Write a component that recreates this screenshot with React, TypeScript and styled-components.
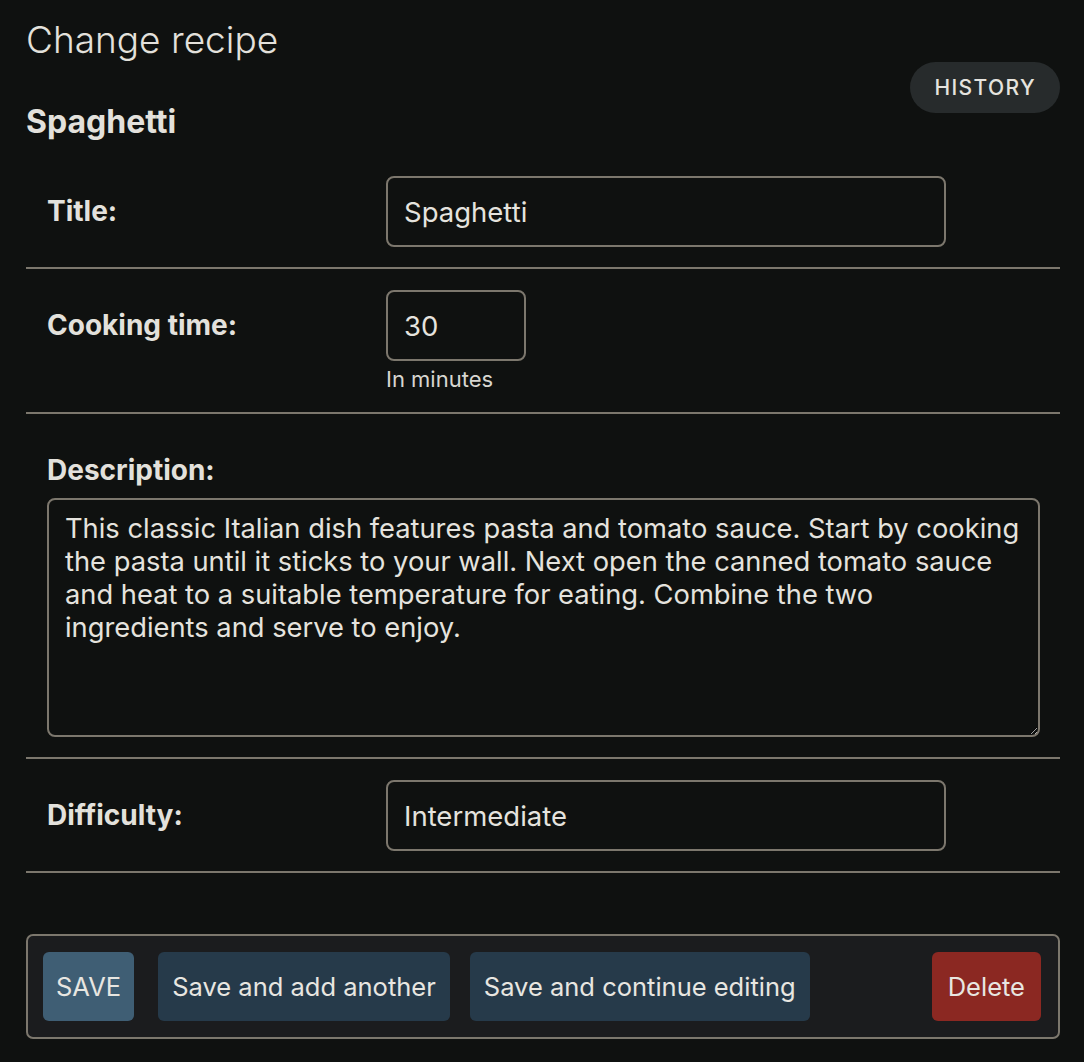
import React from "react";
import styled, { createGlobalStyle } from "styled-components";

const Global = createGlobalStyle`
  html, body { margin: 0; padding: 0; background: #0f1110; }
  body { font-family: Inter, "Noto Sans", sans-serif; color: #e5e3de; }
  * { box-sizing: border-box; }
`;

const Page = styled.main`
  width: 1084px;
  padding: 0 24px 0 26px;
`;

const Header = styled.header`
  display: flex;
  justify-content: space-between;
  align-items: flex-start;
`;

const Titles = styled.div`
  display: flex;
  flex-direction: column;
`;

const H1 = styled.h1`
  margin: 17px 0 0;
  font-size: 37px;
  line-height: 46px;
  font-weight: 300;
  color: #e3e1dc;
`;

const H2 = styled.h2`
  margin: 40px 0 0;
  font-size: 32px;
  line-height: 38px;
  font-weight: 700;
  color: #e3e1dc;
`;

const HistoryButton = styled.button`
  margin-top: 62px;
  height: 51px;
  padding: 0 24px;
  border: none;
  border-radius: 26px;
  background: #272b2c;
  color: #e5e3de;
  font-family: Inter, sans-serif;
  font-size: 21px;
  font-weight: 500;
  letter-spacing: 1.4px;
  text-transform: uppercase;
`;

const Fieldset = styled.fieldset`
  margin: 14px 0 0;
  padding: 0;
  border: none;
`;

const Row = styled.div<{ $stacked?: boolean }>`
  display: flex;
  flex-direction: ${(p) => (p.$stacked ? "column" : "row")};
  align-items: ${(p) => (p.$stacked ? "stretch" : "flex-start")};
  padding: ${(p) => (p.$stacked ? "40px 20px 20px 21px" : "21px 20px 20px 21px")};
  border-bottom: 2px solid #7c776d;
`;

const Label = styled.label<{ $stacked?: boolean }>`
  width: ${(p) => (p.$stacked ? "auto" : "339px")};
  flex: none;
  font-size: 28px;
  font-weight: 700;
  line-height: 32px;
  padding-top: ${(p) => (p.$stacked ? "0" : "19px")};
  margin-bottom: ${(p) => (p.$stacked ? "12px" : "0")};
  color: #e3e1dc;
`;

const FieldCol = styled.div`
  display: flex;
  flex-direction: column;
`;

const Input = styled.input<{ $w: number }>`
  width: ${(p) => p.$w}px;
  height: 71px;
  padding: 0 16px;
  background: #0f1110;
  border: 2px solid #7c776d;
  border-radius: 8px;
  color: #e5e3de;
  font-family: Inter, sans-serif;
  font-size: 27.5px;
  outline: none;
`;

const Help = styled.div`
  margin-top: 5px;
  font-size: 22px;
  line-height: 26px;
  color: #d8d6d1;
`;

const TextArea = styled.textarea`
  width: 993px;
  height: 239px;
  padding: 12px 16px;
  background: #0f1110;
  border: 2px solid #7c776d;
  border-radius: 8px;
  color: #e5e3de;
  font-family: Inter, sans-serif;
  font-size: 27.3px;
  line-height: 33px;
  resize: vertical;
  outline: none;
`;

const SubmitRow = styled.div`
  margin-top: 61px;
  display: flex;
  align-items: center;
  gap: 20px;
  padding: 16px 17px 16px 15px;
  background: #1b1c1e;
  border: 2px solid #7c776d;
  border-radius: 7px;
`;

const Btn = styled.button<{ $kind: "default" | "secondary" | "danger" }>`
  height: 69px;
  padding: 0 ${(p) => (p.$kind === "danger" ? "16px" : p.$kind === "default" ? "13px" : "14px")};
  border: none;
  border-radius: 6px;
  font-family: Inter, sans-serif;
  font-size: 25.5px;
  color: #e8e6e1;
  background: ${(p) =>
    p.$kind === "default" ? "#3f5e74" : p.$kind === "danger" ? "#8b2822" : "#263a4a"};
  margin-left: ${(p) => (p.$kind === "danger" ? "auto" : "0")};
  margin-right: ${(p) => (p.$kind === "default" ? "4px" : "0")};
`;

export default function App() {
  return (
    <>
      <Global />
      <Page>
        <Header>
          <Titles>
            <H1>Change recipe</H1>
            <H2>Spaghetti</H2>
          </Titles>
          <HistoryButton>History</HistoryButton>
        </Header>
        <Fieldset>
          <Row>
            <Label>Title:</Label>
            <Input $w={560} defaultValue="Spaghetti" />
          </Row>
          <Row>
            <Label>Cooking time:</Label>
            <FieldCol>
              <Input $w={140} defaultValue="30" />
              <Help>In minutes</Help>
            </FieldCol>
          </Row>
          <Row $stacked>
            <Label $stacked>Description:</Label>
            <TextArea defaultValue="This classic Italian dish features pasta and tomato sauce. Start by cooking the pasta until it sticks to your wall. Next open the canned tomato sauce and heat to a suitable temperature for eating. Combine the two ingredients and serve to enjoy." />
          </Row>
          <Row>
            <Label>Difficulty:</Label>
            <Input $w={560} defaultValue="Intermediate" />
          </Row>
        </Fieldset>
        <SubmitRow>
          <Btn $kind="default">SAVE</Btn>
          <Btn $kind="secondary">Save and add another</Btn>
          <Btn $kind="secondary">Save and continue editing</Btn>
          <Btn $kind="danger">Delete</Btn>
        </SubmitRow>
      </Page>
    </>
  );
}
